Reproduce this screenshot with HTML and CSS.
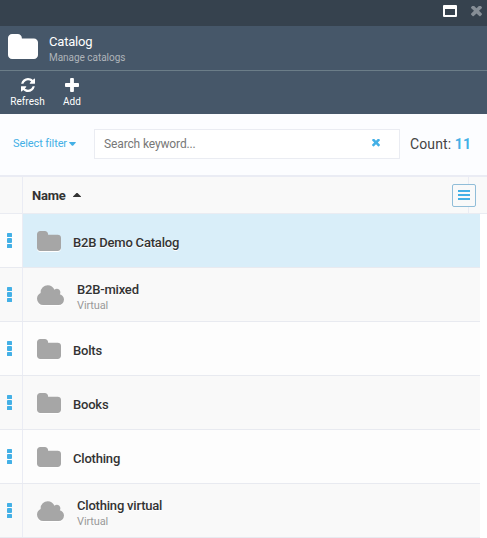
FILE: index.html
```html
<!DOCTYPE html>
<html lang="en">
<head>
<meta charset="utf-8">
<title>Catalog</title>
<link rel="stylesheet" href="styles.css">
</head>
<body>
<svg width="0" height="0" class="symbols">
  <symbol id="folder" viewBox="0 0 1664 1408" preserveAspectRatio="none"><path d="M1664 480v704q0 92-66 158t-158 66H224q-92 0-158-66T0 1184V224Q0 132 66 66T224 0h320q92 0 158 66t66 158v32h672q92 0 158 66t66 158z"/></symbol>
  <symbol id="cloud" viewBox="0 0 1920 1280" preserveAspectRatio="none"><path d="M1920 896q0 159-112.500 271.500t-271.500 112.500h-1088q-185 0-316.500-131.500t-131.500-316.500q0-132 71-241.500t187-163.500q-2-28-2-43 0-212 150-362t362-150q158 0 286.500 88t187.500 230q70-62 166-62 106 0 181 75t75 181q0 75-41 138 129 30 213 134.500t84 239.500z" transform="translate(0 128) scale(1 .9)"/></symbol>
  <symbol id="times" viewBox="302 434 1188 1188"><path d="M1490 1322q0 40-28 68l-136 136q-28 28-68 28t-68-28l-294-294-294 294q-28 28-68 28t-68-28l-136-136q-28-28-28-68t28-68l294-294-294-294q-28-28-28-68t28-68l136-136q28-28 68-28t68 28l294 294 294-294q28-28 68-28t68 28l136 136q28 28 28 68t-28 68l-294 294 294 294q28 28 28 68z"/></symbol>
  <symbol id="dots" viewBox="0 0 5 15"><rect width="5" height="4" rx=".6"/><rect y="5" width="5" height="5" rx=".9"/><rect y="11" width="5" height="4" rx=".6"/></symbol>
</svg>
<div class="blade">
  <div class="titlebar">
    <svg class="maximize" viewBox="0 0 14 12"><path fill-rule="evenodd" d="M1 0H13Q14 0 14 1V11Q14 12 13 12H1Q0 12 0 11V1Q0 0 1 0ZM2 4V10H12V4Z"/></svg>
    <svg class="close"><use href="#times"/></svg>
  </div>
  <header class="head">
    <svg class="head-icon"><use href="#folder"/></svg>
    <div>
      <h1 class="title">Catalog</h1>
      <p class="subtitle">Manage catalogs</p>
    </div>
  </header>
  <nav class="toolbar">
    <div class="tool refresh">
      <svg viewBox="0 0 1536 1536"><path d="M1511 928q0 5-1 7-64 268-268 434.500T764 1536q-146 0-282.500-55T238 1324l-129 129q-19 19-45 19t-45-19-19-45V960q0-26 19-45t45-19h448q26 0 45 19t19 45-19 45l-137 137q71 66 161 102t187 36q134 0 250-65t186-179q11-17 53-117 8-23 30-23h192q13 0 22.500 9.500t9.500 22.500zm25-800v448q0 26-19 45t-45 19h-448q-26 0-45-19t-19-45 19-45l138-138Q969 256 768 256q-134 0-250 65T332 500q-11 17-53 117-8 23-30 23H50q-13 0-22.500-9.500T18 608v-7q65-268 270-434.500T768 0q146 0 284 55.500T1297 212l130-129q19-19 45-19t45 19 19 45z"/></svg>
      <span>Refresh</span>
    </div>
    <div class="tool add">
      <svg viewBox="0 0 1408 1408"><path d="M1408 608v192q0 40-28 68t-68 28H896v416q0 40-28 68t-68 28H608q-40 0-68-28t-28-68V896H96q-40 0-68-28T0 800V608q0-40 28-68t68-28h416V96q0-40 28-68t68-28h192q40 0 68 28t28 68v416h416q40 0 68 28t28 68z"/></svg>
      <span>Add</span>
    </div>
  </nav>
  <div class="filters">
    <span class="select">Select filter</span>
    <svg class="caret" viewBox="0 0 7 4"><path d="M.5 0H6.500Q7 .3 6.700 .8L4 3.700Q3.500 4 3 3.700L.3 .8Q0 .3 .5 0Z"/></svg>
    <div class="search">
      <span>Search keyword...</span>
      <svg><use href="#times"/></svg>
    </div>
    <div class="count">Count: <b>11</b></div>
  </div>
  <div class="columns">
    <div class="gutter"></div>
    <div class="name-head">Name <svg viewBox="0 0 8 4"><path d="M0 4V3.500L3.500 0H4.500L8 3.500V4Z"/></svg></div>
    <div class="menu"><i></i><i></i><i></i></div>
  </div>
  <div class="rows">
    <div class="row selected"><div class="gutter"><svg><use href="#dots"/></svg></div><div class="cell"><svg class="folder"><use href="#folder"/></svg><div class="name">B2B Demo Catalog</div></div></div>
    <div class="row alt"><div class="gutter"><svg><use href="#dots"/></svg></div><div class="cell virtual"><svg class="cloud"><use href="#cloud"/></svg><div><div class="name">B2B-mixed</div><div class="kind">Virtual</div></div></div></div>
    <div class="row"><div class="gutter"><svg><use href="#dots"/></svg></div><div class="cell"><svg class="folder"><use href="#folder"/></svg><div class="name">Bolts</div></div></div>
    <div class="row alt"><div class="gutter"><svg><use href="#dots"/></svg></div><div class="cell"><svg class="folder"><use href="#folder"/></svg><div class="name">Books</div></div></div>
    <div class="row"><div class="gutter"><svg><use href="#dots"/></svg></div><div class="cell"><svg class="folder"><use href="#folder"/></svg><div class="name">Clothing</div></div></div>
    <div class="row alt"><div class="gutter"><svg><use href="#dots"/></svg></div><div class="cell virtual"><svg class="cloud"><use href="#cloud"/></svg><div><div class="name">Clothing virtual</div><div class="kind">Virtual</div></div></div></div>
  </div>
</div>
</body>
</html>
```
FILE: styles.css
```css
* { box-sizing: border-box; }
body { margin: 0; font-family: Roboto, sans-serif; background: #fff; overflow: hidden; }
svg { display: block; flex: none; fill: currentColor; }
.symbols { position: absolute; }
.blade { width: 487px; height: 538px; overflow: hidden; }

.titlebar { height: 26px; background: #36424e; display: flex; justify-content: flex-end; padding: 5px 5px 0 0; color: #fff; }
.maximize { width: 14px; height: 12px; }
.close { width: 11px; height: 11px; margin: 1px 0 0 14px; color: #868e96; }

.head { height: 45px; background: #465769; border-bottom: 1px solid #6b7d88; display: flex; padding: 8px 0 0 8px; color: #fff; }
.head-icon { width: 30px; height: 25px; margin-right: 11px; }
.title { margin: 0; font-size: 13px; line-height: 16px; font-weight: 400; letter-spacing: -.2px; }
.subtitle { margin: 1px 0 0; font-size: 10px; line-height: 13px; letter-spacing: -.03px; color: #aeb4b9; }

.toolbar { height: 43px; background: #465769; display: flex; padding: 7px 0 0 10px; color: #fff; }
.tool { display: flex; flex-direction: column; align-items: center; font-size: 10px; line-height: 12px; }
.tool svg { width: 14px; height: 14px; margin-bottom: 4px; }
.refresh { width: 35px; }
.refresh span { letter-spacing: .06px; }
.add { width: 18px; margin-left: 18px; }

.filters { height: 63px; background: #fcfdff; border-bottom: 2px solid #eaecf4; display: flex; align-items: center; padding-left: 13px; }
.select { width: 54px; white-space: nowrap; font-size: 11px; line-height: 14px; letter-spacing: -.1px; margin-top: -2px; color: #43b0e6; }
.caret { width: 7px; height: 4px; margin: -2px 0 0 2px; color: #43b0e6; }
.search { width: 306px; height: 30px; margin: -1px 0 0 18px; border: 1px solid #eaecf2; background: #fff; display: flex; align-items: center; justify-content: space-between; padding: 0 19px 0 9px; font-size: 12px; letter-spacing: -.13px; color: #777; }
.search svg { width: 8px; height: 8px; color: #43b0e6; margin-top: -3px; }
.count { margin: -1px 0 0 10px; font-size: 14px; line-height: 18px; letter-spacing: .12px; color: #444; white-space: nowrap; }
.count b { color: #43b0e6; font-weight: 700; }

.columns { height: 37px; background: #f9f9f9; border-bottom: 1px solid #eaecf2; display: flex; position: relative; }
.gutter { width: 23px; flex: none; border-right: 1px solid #eaecf4; }
.name-head { width: 446px; border-right: 1px solid #eaecf4; display: flex; align-items: center; padding-left: 9px; font-size: 13px; font-weight: 700; letter-spacing: -.25px; color: #333; }
.name-head svg { width: 8px; height: 4px; margin-left: 8px; }
.menu { position: absolute; left: 452px; top: 7px; width: 24px; height: 23px; border: 1px solid #90bdd8; border-radius: 2px; background: #f9f9f9; display: flex; flex-direction: column; align-items: center; padding-top: 5px; gap: 2px; }
.menu i { width: 12px; height: 2px; background: #43b0e6; }

.rows { width: 480px; }
.row { height: 54px; display: flex; border-bottom: 1px solid #e8eaf0; background: #fdfdfd; }
.row .gutter { padding: 19px 0 0 7px; color: #43b0e6; }
.row .gutter svg { width: 5px; height: 15px; }
.alt { background: #f9f9f9; }
.selected .cell { background: #d9eef9; }
.cell { flex: 1; display: flex; padding-left: 14px; }
.folder, .cloud { color: #a6a6a6; filter: drop-shadow(0 1px 0 #fff); }
.folder { width: 24px; height: 20px; margin: 17px 12px 0 0; }
.cloud { width: 27px; height: 20px; margin: 17px 13px 0 0; }
.name { font-size: 13px; line-height: 16px; font-weight: 500; letter-spacing: -.2px; color: #333; text-shadow: 0 1px 0 #fff; white-space: nowrap; }
.cell > .name { margin-top: 21px; }
.virtual .name { margin-top: 14px; }
.kind { font-size: 11px; line-height: 14px; letter-spacing: -.12px; margin-top: 1px; color: #999; }
```
